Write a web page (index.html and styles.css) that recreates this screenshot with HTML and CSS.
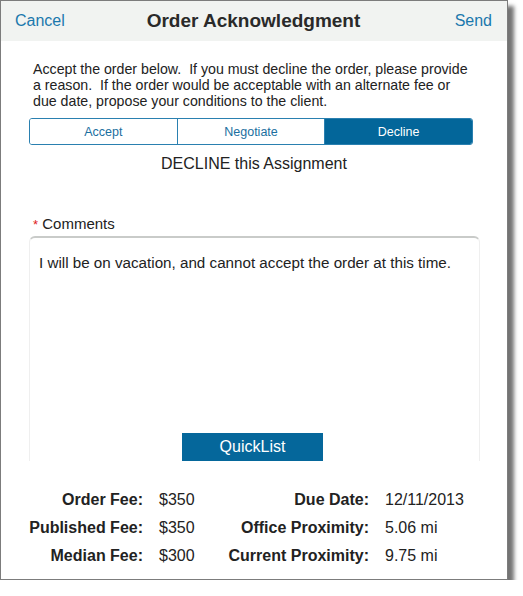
FILE: index.html
```html
<!DOCTYPE html>
<html lang="en">
<head>
  <meta charset="UTF-8">
  <meta name="viewport" content="width=device-width, initial-scale=1.0">
  <title>Order Acknowledgment</title>
  <link rel="stylesheet" href="styles.css">
</head>
<body>
  <div class="panel">
    <div class="navbar">
      <a class="nav-link">Cancel</a>
      <h1>Order Acknowledgment</h1>
      <a class="nav-link send">Send</a>
    </div>

    <div class="content">
      <p class="intro">Accept the order below.&nbsp; If you must decline the order, please provide a reason.&nbsp; If the order would be acceptable with an alternate fee or due date, propose your conditions to the client.</p>

      <div class="segments">
        <button>Accept</button>
        <button>Negotiate</button>
        <button class="active">Decline</button>
      </div>

      <div class="mode-title">DECLINE this Assignment</div>

      <label class="field-label"><span class="required">*</span> Comments</label>
      <div class="comments">
        <div class="comments-text">I will be on vacation, and cannot accept the order at this time.</div>
        <button class="quicklist">QuickList</button>
      </div>

      <div class="fees">
        <span class="fee-label">Order Fee:</span>
        <span>$350</span>
        <span class="fee-label">Due Date:</span>
        <span>12/11/2013</span>

        <span class="fee-label">Published Fee:</span>
        <span>$350</span>
        <span class="fee-label">Office Proximity:</span>
        <span>5.06 mi</span>

        <span class="fee-label">Median Fee:</span>
        <span>$300</span>
        <span class="fee-label">Current Proximity:</span>
        <span>9.75 mi</span>
      </div>
    </div>
  </div>
</body>
</html>
```

FILE: styles.css
```css
body {
  margin: 0;
  background-color: white;
  font-family: "Liberation Sans", Arial, sans-serif;
  color: #222;
}
.panel {
  width: 506px;
  height: 578px;
  border: 1px solid #7c7c7c;
  background-color: white;
  box-shadow: 6px 6px 4px rgba(0,0,0,0.55);
  overflow: hidden;
}
.navbar {
  height: 40px;
  background-color: #f1f3f1;
  display: grid;
  grid-template-columns: 1fr auto 1fr;
  align-items: center;
  padding: 0 15px 0 14px;
}
.nav-link {
  color: #1b78ad;
  font-size: 16px;
}
.nav-link.send {
  text-align: right;
}
h1 {
  margin: 0;
  font-size: 19px;
  font-weight: bold;
  color: #2a2a2a;
}
.content {
  padding: 0 28px 0 28px;
}
.intro {
  margin: 20px 0 0 4px;
  width: 440px;
  font-size: 14.2px;
  line-height: 16px;
  color: #222;
}
.segments {
  margin-top: 9px;
  display: flex;
  border: 1px solid #2a80b0;
  border-radius: 3px;
  overflow: hidden;
  width: 442px;
}
.segments button {
  flex: 1;
  height: 25px;
  border: none;
  border-left: 1px solid #2a80b0;
  background-color: white;
  color: #1b6fa0;
  font-family: inherit;
  font-size: 12.5px;
  padding: 0;
}
.segments button:first-child {
  border-left: none;
}
.segments button.active {
  background-color: #03669a;
  color: white;
}
.mode-title {
  margin-top: 10px;
  text-align: center;
  font-size: 16px;
}
.field-label {
  display: block;
  margin: 42px 0 0 4px;
  font-size: 15px;
}
.required {
  color: #e02020;
  font-size: 13px;
}
.comments {
  margin-top: 4px;
  width: 449px;
  height: 223px;
  border: 1px solid #efefef;
  border-top: 2px solid #c9cbc9;
  border-bottom: none;
  border-radius: 6px 6px 0 0;
  display: flex;
  flex-direction: column;
  align-items: center;
}
.comments-text {
  align-self: stretch;
  padding: 16px 0 0 9px;
  font-size: 15.2px;
}
.quicklist {
  margin-top: auto;
  width: 141px;
  height: 28px;
  border: none;
  background-color: #05679b;
  color: white;
  font-family: inherit;
  font-size: 16px;
  padding: 0;
  position: relative;
  left: -2px;
}
.fees {
  margin: 30px 0 0 -28px;
  display: grid;
  grid-template-columns: 142px 50px 144px auto;
  column-gap: 16px;
  row-gap: 10px;
  font-size: 16px;
  line-height: 18px;
}
.fee-label {
  text-align: right;
  font-weight: bold;
}
```
